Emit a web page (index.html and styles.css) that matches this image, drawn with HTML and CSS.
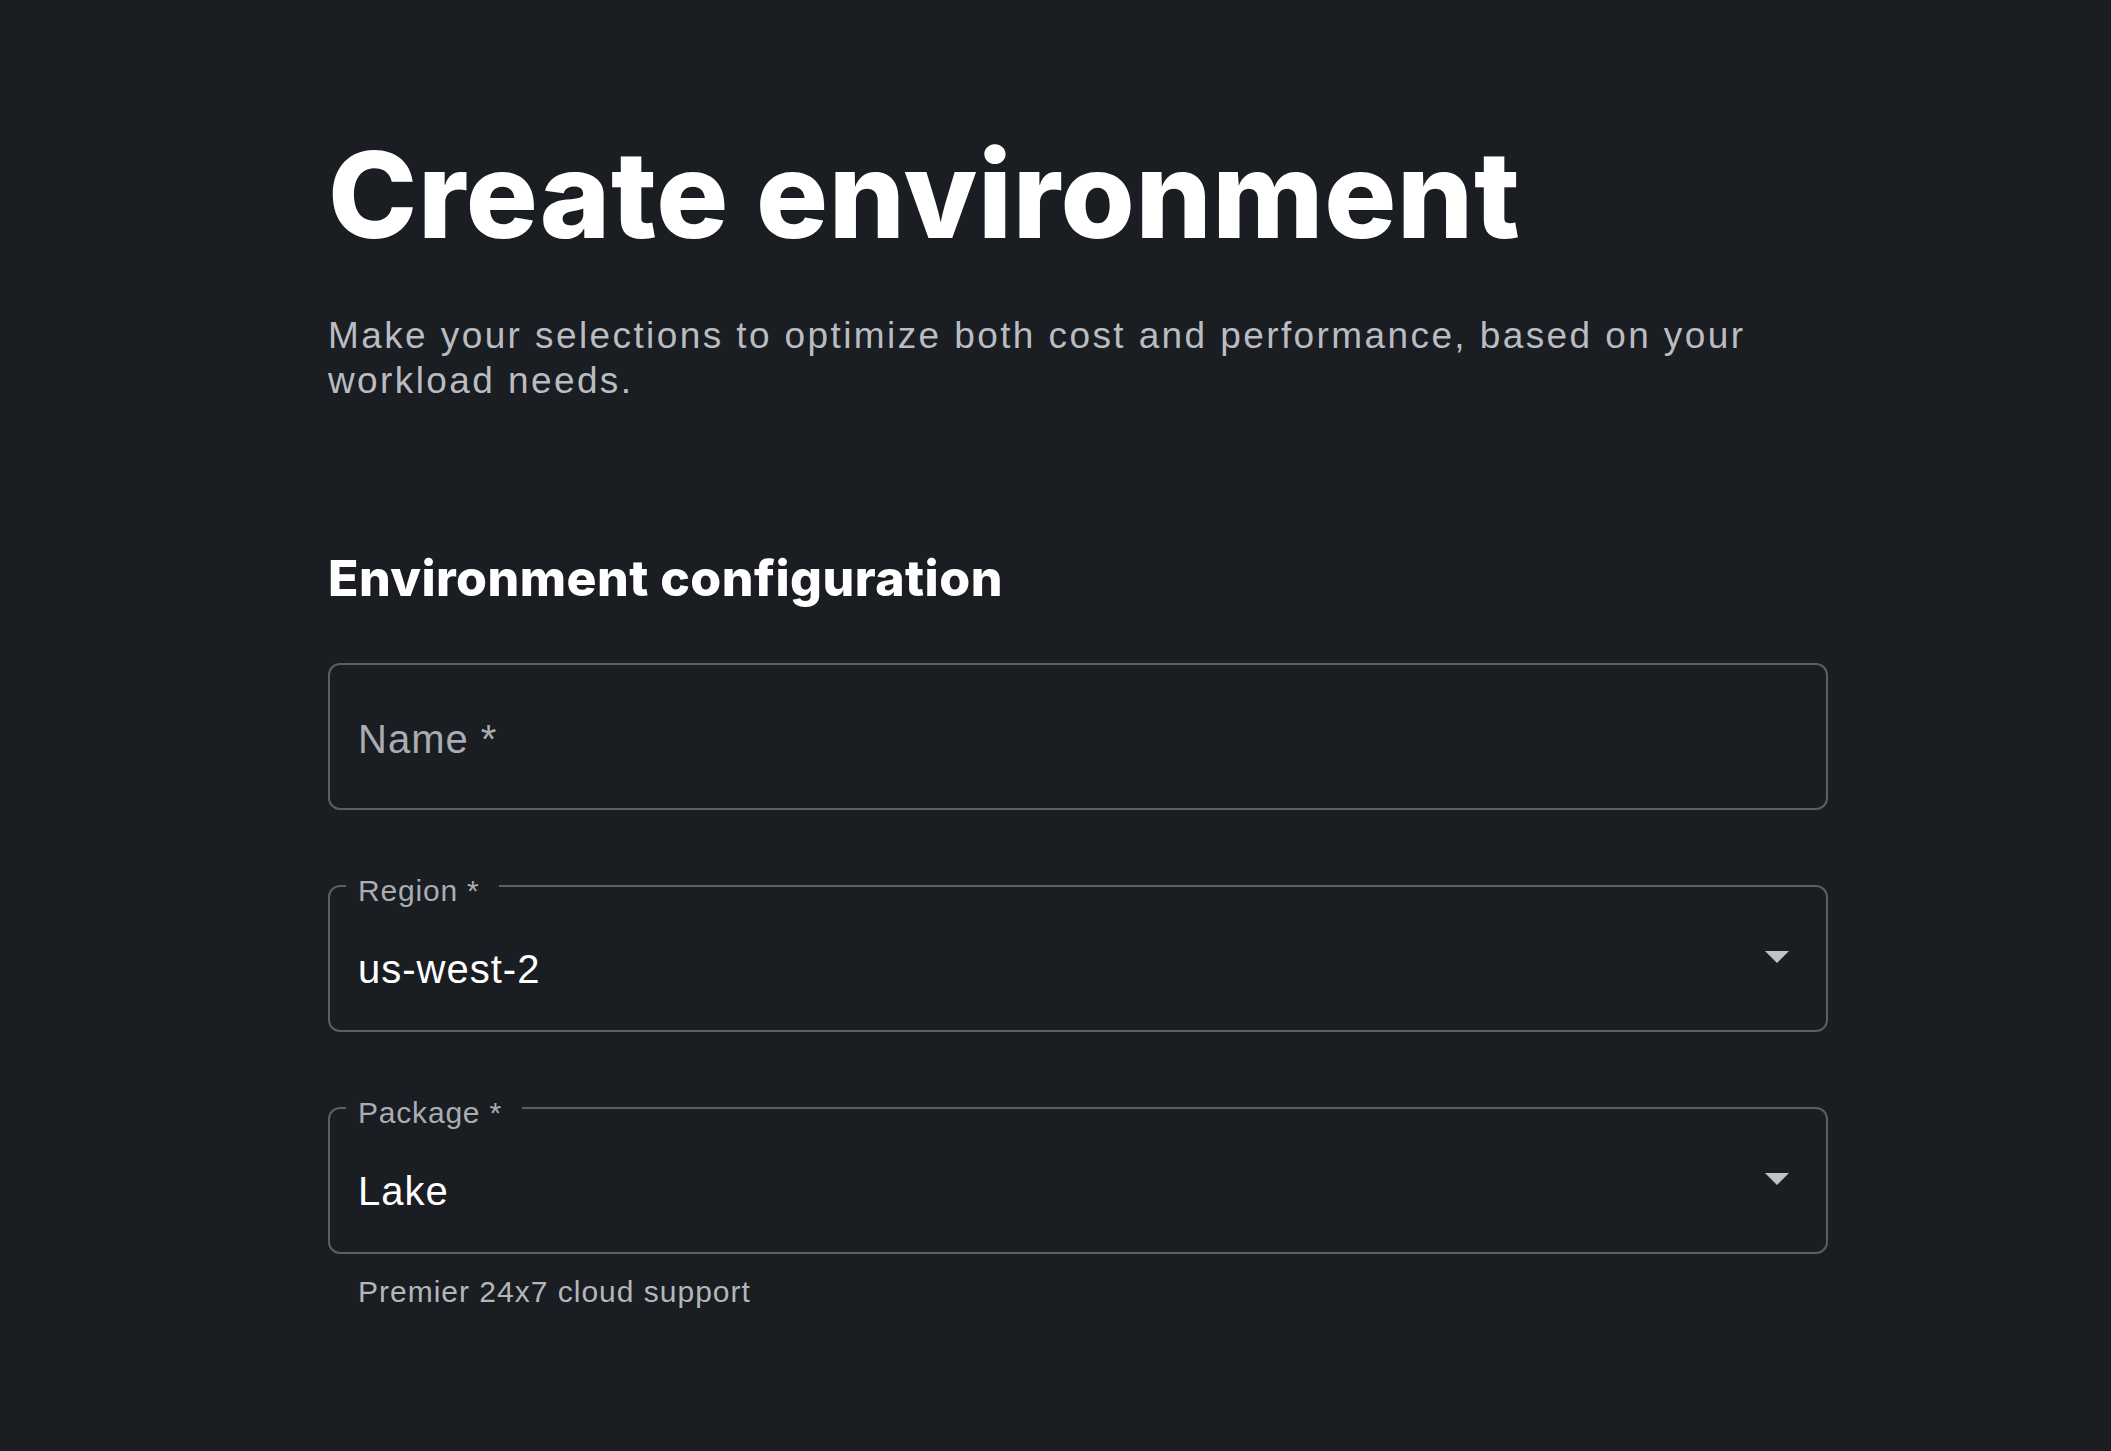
FILE: index.html
```html
<!DOCTYPE html>
<html lang="en">
<head>
<meta charset="utf-8">
<title>Create environment</title>
<link rel="stylesheet" href="styles.css">
</head>
<body>
<main class="page">
  <h1 class="title">Create environment</h1>
  <p class="subtitle">Make your selections to optimize both cost and performance, based on your workload needs.</p>
  <h2 class="section-title">Environment configuration</h2>
  <form class="form">
    <div class="field">
      <span class="placeholder">Name *</span>
    </div>
    <div class="field field--select">
      <span class="label">Region *</span>
      <span class="value">us-west-2</span>
      <svg class="caret" viewBox="0 0 24 12" width="24" height="12" aria-hidden="true"><polygon points="0,0 24,0 12,12"/></svg>
    </div>
    <div class="field-group">
      <div class="field field--select">
        <span class="label">Package *</span>
        <span class="value">Lake</span>
        <svg class="caret" viewBox="0 0 24 12" width="24" height="12" aria-hidden="true"><polygon points="0,0 24,0 12,12"/></svg>
      </div>
      <p class="helper">Premier 24x7 cloud support</p>
    </div>
  </form>
</main>
</body>
</html>
```

FILE: styles.css
```css
html, body {
  margin: 0;
  padding: 0;
  background: #1a1d21;
}

body {
  min-height: 1451px;
  font-family: "Liberation Sans", Arial, sans-serif;
  color: #ffffff;
}

.page {
  width: 1500px;
  padding: 123px 0 0 328px;
}

.title {
  margin: 0;
  font-family: Inter, Lato, sans-serif;
  font-weight: 800;
  font-size: 120px;
  line-height: 1.2;
  letter-spacing: 0.7px;
  color: #ffffff;
}

.subtitle {
  margin: 46px 0 0;
  font-size: 37px;
  line-height: 45px;
  letter-spacing: 2.4px;
  color: #b9bcc1;
}

.section-title {
  margin: 145px 0 0;
  font-family: Inter, Lato, sans-serif;
  font-weight: 800;
  font-size: 50px;
  line-height: 1.2;
  letter-spacing: 0.45px;
  color: #ffffff;
}

.form {
  margin-top: 55px;
  display: flex;
  flex-direction: column;
  gap: 75px;
}

.field {
  position: relative;
  box-sizing: border-box;
  height: 147px;
  border: 2px solid #5b5f64;
  border-radius: 12px;
  display: flex;
  align-items: center;
  padding: 4px 28px 0;
}

.field--select {
  padding-top: 20px;
}

.placeholder {
  font-size: 40px;
  line-height: 46px;
  letter-spacing: 1px;
  color: #a9adb3;
}

.value {
  font-size: 40px;
  line-height: 46px;
  letter-spacing: 1px;
  color: #ffffff;
}

.label {
  position: absolute;
  top: -13px;
  left: 16px;
  padding: 0 20px 0 12px;
  background: #1a1d21;
  font-size: 30px;
  line-height: 34px;
  letter-spacing: 0.8px;
  color: #a9adb3;
}

.caret {
  position: absolute;
  top: 64px;
  right: 37px;
  fill: #c0c3c7;
}

.helper {
  margin: 20px 0 0 30px;
  font-size: 30px;
  line-height: 36px;
  letter-spacing: 1px;
  color: #b3b6bb;
}
```
